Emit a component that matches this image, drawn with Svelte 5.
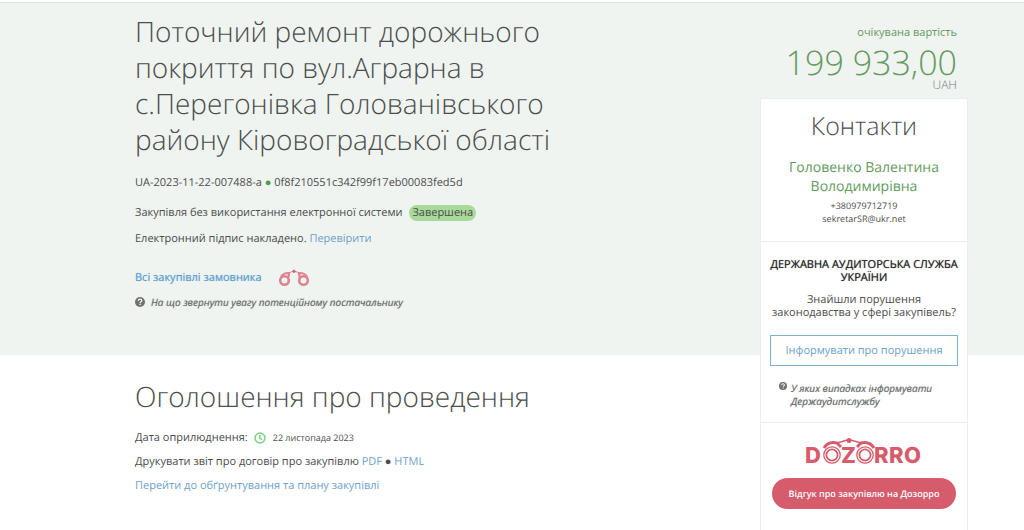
<script>
	const tender = {
		title: 'Поточний ремонт дорожнього покриття по вул.Аграрна в с.Перегонівка Голованівського району Кіровоградської області',
		id: 'UA-2023-11-22-007488-a',
		hash: '0f8f210551c342f99f17eb00083fed5d',
		procedure: 'Закупівля без використання електронної системи',
		status: 'Завершена',
		published: '22 листопада 2023',
		amount: '199 933,00',
		currency: 'UAH'
	};

	const contact = {
		name: 'Головенко Валентина Володимирівна',
		phone: '+380979712719',
		email: 'sekretarSR@ukr.net'
	};
</script>

{#snippet question()}
	<svg class="question" viewBox="0 0 10 10" aria-hidden="true">
		<circle cx="5" cy="5" r="5" fill="#707270" />
		<path d="M3.3 3.9C3.4 2.7 4.1 2.2 5 2.2c1 0 1.8.6 1.8 1.5C6.8 4.8 5.2 4.9 5.2 6" fill="none" stroke="#f4f6f4" stroke-width="1.3" />
		<rect x="4.5" y="6.7" width="1.4" height="1.3" fill="#f4f6f4" />
	</svg>
{/snippet}

<div class="page">
	<section class="hero">
		<h1>{tender.title}</h1>
		<p class="ids">{tender.id} <span class="dot">●</span> {tender.hash}</p>
		<p class="procedure">{tender.procedure} <span class="status">{tender.status}</span></p>
		<p class="sign">Електронний підпис накладено. <a href="#sign">Перевірити</a></p>
		<div class="buyer">
			<a href="#buyer">Всі закупівлі замовника</a>
			<svg class="binoculars" viewBox="0 0 32 18" aria-hidden="true">
				<g fill="none" stroke="#df8391">
					<circle cx="6.500" cy="11.500" r="4.300" stroke-width="2.600" />
					<circle cx="25.500" cy="11.500" r="4.300" stroke-width="2.600" />
					<path d="M3 8C4.500 5 7 3.800 11 4l-.5 4M29 8C27.500 5 25 3.800 21 4l.5 4" stroke-width="2.200" />
					<path d="M10 4L16 2l6 2" stroke-width="1" />
				</g>
				<circle cx="16" cy="2.300" r="1.600" fill="#c9657a" />
			</svg>
		</div>
		<p class="hint">{@render question()}<a href="#attention">На що звернути увагу потенційному постачальнику</a></p>
	</section>

	<section class="announce">
		<h2>Оголошення про проведення</h2>
		<p class="date">
			Дата оприлюднення:
			<svg class="clock" viewBox="0 0 12 12" aria-hidden="true">
				<circle cx="6" cy="6" r="5" />
				<path d="M5.800 3v3.300l2.200 1.400" />
			</svg>
			<small>{tender.published}</small>
		</p>
		<p class="print">Друкувати звіт про договір про закупівлю <a href="#pdf">PDF</a> ● <a href="#html">HTML</a></p>
		<p class="plan"><a href="#plan">Перейти до обґрунтування та плану закупівлі</a></p>
	</section>

	<aside>
		<div class="value">
			<div class="label">очікувана вартість</div>
			<div class="amount">{tender.amount}</div>
			<div class="currency">{tender.currency}</div>
		</div>
		<div class="card">
			<div class="block contacts">
				<h3>Контакти</h3>
				<div class="name">{contact.name}</div>
				<div>{contact.phone}</div>
				<div>{contact.email}</div>
			</div>
			<div class="block audit">
				<h4>Державна аудиторська служба України</h4>
				<p>Знайшли порушення законодавства у сфері закупівель?</p>
				<button class="inform">Інформувати про порушення</button>
				<p class="when">{@render question()}<a href="#when">У яких випадках інформувати Держаудитслужбу</a></p>
			</div>
			<div class="block dozorro">
				<svg class="logo" viewBox="0 0 120 34" role="img" aria-label="Dozorro">
					<g fill="none" stroke="#d65c6c">
						<path d="M20 10C23 5 27 3.500 33 5l4 4M70 10C67 5 63 3.500 57 5l-4 4" stroke-width="3" />
						<path d="M33 5L45 1.500L57 5" stroke-width="1.400" />
						<circle cx="28" cy="17" r="8.200" fill="#fff" stroke-width="1.300" />
						<circle cx="28" cy="17" r="5.600" stroke-width="1.800" />
						<circle cx="61" cy="17" r="8.200" fill="#fff" stroke-width="1.300" />
						<circle cx="61" cy="17" r="5.600" stroke-width="1.800" />
					</g>
					<circle cx="45" cy="2.500" r="2.500" fill="#d65c6c" />
					<g class="letters">
						<text x="1" y="25">D</text>
						<text x="37" y="25">Z</text>
						<text x="70" y="25">R</text>
						<text x="85" y="25">R</text>
						<text x="100" y="25">O</text>
					</g>
				</svg>
				<button class="feedback">Відгук про закупівлю на Дозорро</button>
			</div>
		</div>
	</aside>
</div>

<style>
:global(body) {
	background: #fff;
}
.page {
	display: grid;
	grid-template-columns: 1fr 208px 56px;
	grid-template-rows: auto 1fr;
	margin-top: 2px;
	border-top: 1px solid #dfe3e0;
	font-family: "Open Sans", "Noto Sans", sans-serif;
	font-size: 11px;
	line-height: 16px;
	color: #4b4e4c;
	text-rendering: geometricPrecision;
}
h1, h2, h3, h4, p {
	margin: 0;
}
a {
	color: #6d9fcb;
	text-decoration: none;
}
.hero {
	grid-area: 1 / 1 / 2 / 4;
	background: #f0f4f1;
	padding: 11px 320px 45px 135px;
}
h1, h2 {
	font-size: 28px;
	font-weight: 300;
	line-height: 36px;
}
h1 {
	max-width: 430px;
}
.ids {
	margin-top: 17px;
}
.dot {
	color: #4f9a45;
}
.procedure {
	margin-top: 14px;
}
.status {
	display: inline-block;
	margin-left: 4px;
	padding: 0 3px;
	border-radius: 8px;
	background: #a9d99b;
}
.sign {
	margin-top: 10px;
}
.buyer {
	display: flex;
	align-items: center;
	gap: 16px;
	margin-top: 22px;
	font-weight: 500;
	text-shadow: 0 0 1px #9cc3e0;
}
.buyer a {
	color: #5a9dcc;
}
.binoculars {
	width: 32px;
	height: 18px;
}
.hint, .when {
	display: flex;
	font-style: italic;
	font-size: 10px;
	font-weight: 500;
	text-shadow: 0 0 1px #a5a8a6;
}
.hint {
	gap: 6px;
	align-items: center;
	margin-top: 7px;
}
.hint a, .when a {
	color: #666967;
}
.question {
	flex: none;
	width: 10px;
	height: 10px;
}
.announce {
	grid-area: 2 / 1 / 3 / 2;
	padding: 24px 16px 24px 135px;
}
.date {
	display: flex;
	align-items: center;
	margin-top: 15px;
}
.clock {
	width: 12px;
	height: 12px;
	margin: 0 7px 0 6px;
	fill: none;
	stroke: #7bd183;
	stroke-width: 1.5;
}
small {
	font-size: 9px;
}
.print, .plan {
	margin-top: 8px;
}
aside {
	grid-area: 1 / 2 / 3 / 3;
}
.value {
	padding: 22px 11px 8px 0;
	text-align: right;
	color: #659a5e;
}
.amount {
	padding-top: 4px;
	font-size: 34px;
	font-weight: 300;
	line-height: 35px;
	white-space: nowrap;
}
.currency {
	font-size: 12px;
	line-height: 10px;
	font-weight: 300;
	color: #777a78;
}
.card {
	border: 1px solid #ebeeec;
	background: #fff;
	text-align: center;
}
.block {
	padding: 0 10px;
}
.block + .block {
	border-top: 1px solid #ebeeec;
}
.contacts {
	padding: 9px 10px 16px;
	font-size: 9px;
	line-height: 13px;
}
h3 {
	font-size: 25px;
	font-weight: 300;
	line-height: 36px;
}
.name {
	margin: 14px 16px 3px;
	font-size: 14px;
	line-height: 19px;
	color: #659a5e;
}
.audit {
	padding: 16px 9px 14px;
	line-height: 13px;
}
h4 {
	margin: 0 -6px;
	font-size: 11px;
	font-weight: 500;
	text-transform: uppercase;
	text-shadow: 0 0 1px #666;
	color: #222;
}
.audit p {
	margin-top: 9px;
}
button {
	font-family: inherit;
	text-rendering: inherit;
	cursor: pointer;
}
.inform {
	width: 100%;
	height: 31px;
	margin-top: 16px;
	border: 1px solid #7fb0cc;
	background: #fff;
	font-size: 11px;
	color: #6d9fcb;
}
.audit .when {
	gap: 4px;
	margin-top: 16px;
	padding-left: 9px;
	text-align: left;
}
.when .question {
	width: 8px;
	height: 8px;
}
.dozorro {
	padding: 15px 11px 40px;
}
.logo {
	display: block;
	width: 120px;
	height: 34px;
	margin: 0 auto 6px;
}
.letters {
	font-family: Inter, sans-serif;
	font-size: 22px;
	font-weight: 800;
	fill: #d65c6c;
}
.feedback {
	width: 100%;
	height: 31px;
	padding: 0;
	border: 0;
	border-radius: 16px;
	background: #d65c6c;
	font-size: 9px;
	font-weight: 600;
	color: #fff;
}
</style>
